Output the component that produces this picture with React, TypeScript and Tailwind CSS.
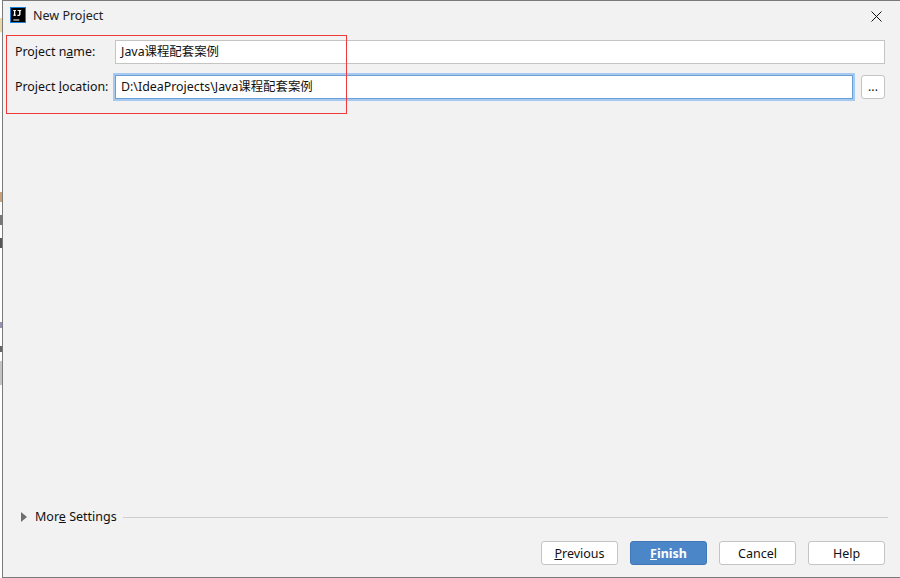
const font = "font-['Noto_Sans','Noto_Sans_CJK_SC',sans-serif]";

const Btn = ({ children, primary }: { children: React.ReactNode; primary?: boolean }) => (
	<button
		className={
			primary
				? "w-[77px] h-[24px] pt-[2px] rounded-[3px] border border-[#3f78b4] bg-[#4b87c8] text-white font-bold text-[12.5px] leading-none"
				: "w-[77px] h-[24px] pt-[2px] rounded-[3px] border border-[#c4c4c4] bg-white text-[#111] text-[12.5px] leading-none"
		}
	>
		{children}
	</button>
);

export default function App() {
	return (
		<div className={`relative flex w-[900px] h-[578px] bg-white overflow-hidden ${font}`}>
			{/* sliver of the window behind the dialog */}
			<div className="w-[2px] shrink-0 flex flex-col bg-white">
				<div className="h-[14px] mt-[18px] bg-[#e8d9a8]" />
				<div className="h-[10px] mt-[160px] bg-[#c9a27a]" />
				<div className="h-[10px] mt-[13px] bg-[#777]" />
				<div className="h-[10px] mt-[13px] bg-[#555]" />
				<div className="h-[6px] mt-[74px] bg-[#9a90b8]" />
				<div className="h-[6px] mt-[18px] bg-[#666]" />
				<div className="h-[24px] mt-[9px] bg-[#c4c4c4]" />
			</div>
			<div className="flex-1 flex flex-col bg-[#f2f2f2] border-l border-t border-b border-[#7a7a7a] text-[12.4px] text-[#111]">
				{/* title bar */}
				<div className="flex items-center h-[30px] pl-[7px] pr-[18px]">
					<svg width="16" height="16" viewBox="0 0 16 16" className="shrink-0 mb-[2px]">
						<rect x="0" y="0" width="16" height="16" fill="#1a7fd6" />
						<rect x="1" y="1" width="14" height="14" fill="#000" />
						<rect x="3.3" y="12.5" width="6" height="1" fill="#fff" />
						<path d="M4.6 3v5.7M9.8 3v4.2a1.2 1.2 0 0 1-1.2 1.2H7.4" stroke="#fff" strokeWidth="1.4" fill="none" />
						<path d="M3.3 3.5h2.6M3.3 8.2h2.6M7.6 3.5h3.6" stroke="#fff" strokeWidth="1" fill="none" />
					</svg>
					<span className="ml-[7px] text-[12.5px] text-[#222]">New Project</span>
					<svg width="11" height="11" viewBox="0 0 11 11" className="ml-auto">
						<path d="M0.5 0.5L10.5 10.5M10.5 0.5L0.5 10.5" stroke="#111" strokeWidth="1" />
					</svg>
				</div>
				{/* form */}
				<div className="flex flex-col gap-[11px] mt-[9px] pl-[12px] pr-[15px]">
					<div className="flex items-center">
						<span className="w-[100px] shrink-0">
							Project n<u>a</u>me:
						</span>
						<div className="flex-1 h-[24px] flex items-center pl-[5px] bg-white border border-[#c4c4c4]">Java课程配套案例</div>
					</div>
					<div className="flex items-center">
						<span className="w-[100px] shrink-0">
							Project <u>l</u>ocation:
						</span>
						<div className="flex-1 h-[24px] flex items-center pl-[5px] bg-white border border-[#6a9fd8] outline-2 outline-[#a6c9ef]">
							D:\IdeaProjects\Java课程配套案例
						</div>
						<button className="ml-[8px] w-[24px] h-[24px] rounded-[3px] bg-white border border-[#c4c4c4] leading-none">...</button>
					</div>
				</div>
				<div className="flex-1" />
				{/* more settings */}
				<div className="flex items-center pl-[18px] pr-[12px]">
					<svg width="6" height="10" viewBox="0 0 6 10" className="mb-[2px]">
						<path d="M0 0L6 5L0 10Z" fill="#6e6e6e" />
					</svg>
					<span className="ml-[8px] text-[12.5px]">
						Mor<u>e</u> Settings
					</span>
					<div className="flex-1 h-px ml-[6px] bg-[#cfcfcf]" />
				</div>
				{/* buttons */}
				<div className="flex justify-end gap-[12px] mt-[14px] mb-[12px] pr-[15px]">
					<Btn>
						<u>P</u>revious
					</Btn>
					<Btn primary>
						<u>F</u>inish
					</Btn>
					<Btn>Cancel</Btn>
					<Btn>Help</Btn>
				</div>
			</div>
			{/* red annotation box */}
			<div className="absolute left-[6px] top-[35px] w-[341px] h-[79px] border border-[#f03a3a]" />
		</div>
	);
}
